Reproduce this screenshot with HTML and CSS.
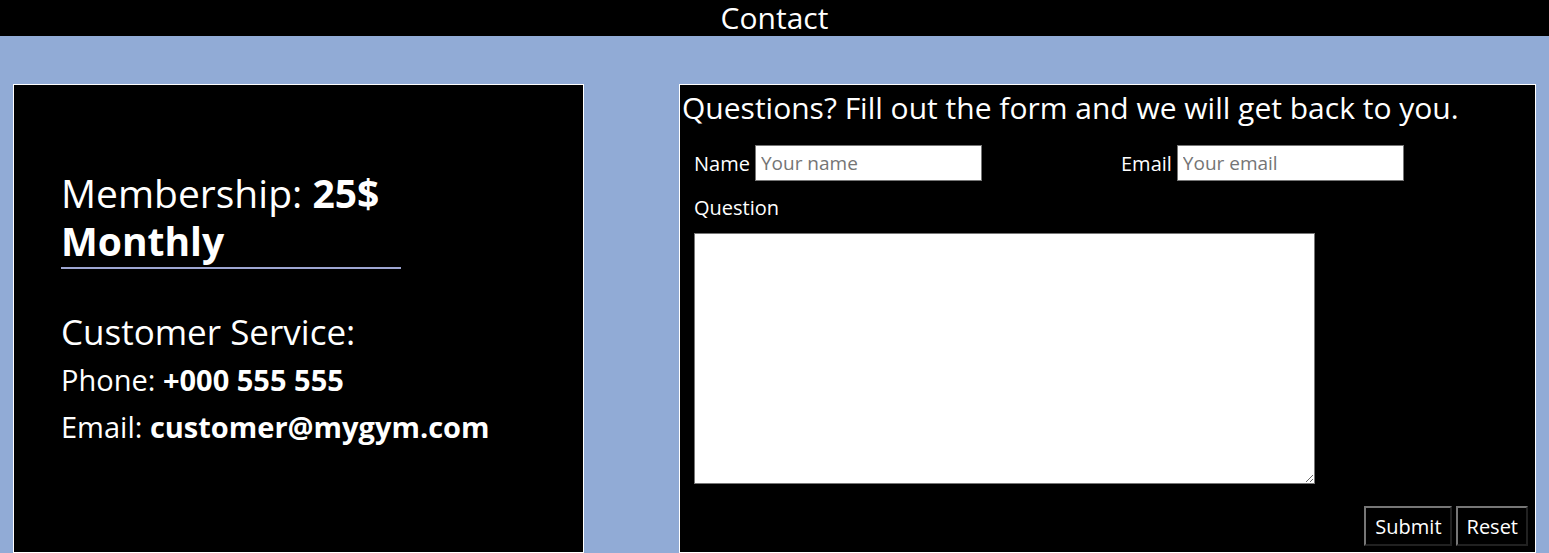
FILE: index.html
```html
<!DOCTYPE html>
<html lang="en">
<head>
<meta charset="utf-8">
<title>Contact</title>
<link rel="stylesheet" href="styles.css">
</head>
<body>
<header class="topbar"><h1 class="topbar-title">Contact</h1></header>
<main class="contact">
  <section class="card info">
    <h2 class="membership">Membership: <strong>25$</strong> <strong>Monthly</strong></h2>
    <h3 class="service-title">Customer Service:</h3>
    <p class="service-line">Phone: <strong>+000 555 555</strong></p>
    <p class="service-line">Email: <strong>customer@mygym.com</strong></p>
  </section>
  <section class="card form-card">
    <h2 class="form-title">Questions? Fill out the form and we will get back to you.</h2>
    <form class="form">
      <div class="form-row">
        <label class="field">Name <input class="text-input" type="text" placeholder="Your name"></label>
        <label class="field">Email <input class="text-input" type="email" placeholder="Your email"></label>
      </div>
      <label class="question-label" for="q">Question</label>
      <textarea id="q" class="question"></textarea>
      <div class="actions">
        <button class="btn" type="submit">Submit</button>
        <button class="btn" type="reset">Reset</button>
      </div>
    </form>
  </section>
</main>
</body>
</html>
```
FILE: styles.css
```css
* { box-sizing: border-box; }
html, body { margin: 0; padding: 0; }
body {
  background: #91abd6;
  font-family: "Open Sans", "Noto Sans", sans-serif;
  color: #fff;
  overflow: hidden;
}
.topbar {
  background: #000;
  height: 36px;
  display: flex;
  justify-content: center;
  align-items: center;
}
.topbar-title {
  margin: 0;
  font-weight: 400;
  font-size: 30px;
  line-height: 36px;
}
.contact {
  display: grid;
  grid-template-columns: 571px 857px;
  column-gap: 95px;
  padding: 48px 13px 0;
}
.card {
  background: #000;
  border: 1px solid #fff;
  height: 469px;
}
.info {
  padding: 84px 20px 0 47px;
}
.membership {
  width: 340px;
  margin: 0;
  font-size: 39px;
  font-weight: 400;
  line-height: 48px;
  padding-bottom: 2px;
  border-bottom: 2px solid #9ea6d2;
}
.membership strong { font-weight: 700; }
.service-title {
  margin: 40px 0 0;
  font-size: 35px;
  font-weight: 400;
  line-height: 46px;
}
.service-line {
  margin: 2px 0 0;
  font-size: 29px;
  line-height: 45px;
}
.service-line strong { font-weight: 700; }
.form-card {
  padding: 3px 0 0 2px;
}
.form-title {
  margin: 0;
  font-size: 30px;
  font-weight: 400;
  line-height: 40px;
}
.form {
  padding: 17px 7px 0 12px;
}
.form-row {
  display: grid;
  grid-template-columns: 427px 300px;
}
.field {
  font-size: 20px;
  display: flex;
  align-items: center;
  gap: 5px;
}
.text-input {
  width: 227px;
  height: 36px;
  border: 1px solid #767676;
  font: inherit;
  font-size: 19px;
  padding: 0 5px;
  color: #000;
  background: #fff;
}
.text-input::placeholder { color: #757575; }
.question-label {
  display: block;
  margin-top: 13px;
  font-size: 20px;
  line-height: 28px;
}
.question {
  display: block;
  margin-top: 11px;
  width: 621px;
  height: 251px;
  border: 1px solid #767676;
  background: #fff;
}
.actions {
  display: flex;
  justify-content: flex-end;
  gap: 4px;
  margin-top: 22px;
}
.btn {
  background: #000;
  color: #fff;
  border: 2px outset #767676;
  font: inherit;
  font-size: 20px;
  height: 40px;
  padding: 0 8px 0 9px;
}
```
